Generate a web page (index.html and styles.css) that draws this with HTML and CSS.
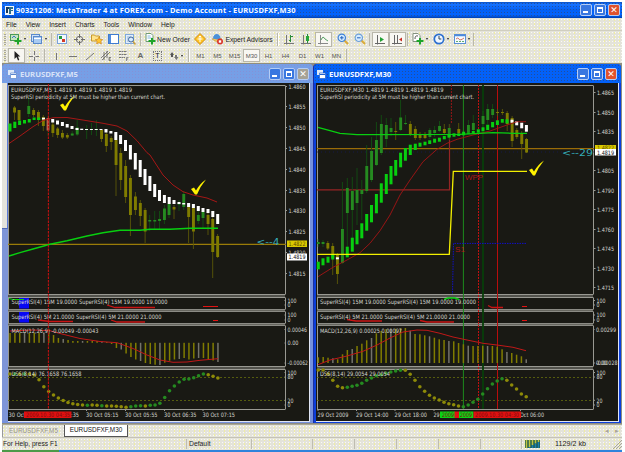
FILE: index.html
```
<!DOCTYPE html>
<html lang="en">
<head>
    <meta charset="UTF-8">
    <meta name="viewport" content="width=device-width, initial-scale=1.0">
    <title>MetaTrader 4</title>
    <link rel="stylesheet" href="styles.css">
</head>
<body>
    <div class="app">
        <header class="titlebar">
            <svg class="app-icon" viewBox="0 0 9 9"><rect width="9" height="9" fill="#f2f6fa"/><path d="M1 1h3v2H3v4H1z" fill="#173a5e"/><path d="M4 1h4v2H6v1h2v1H6v3H4z" fill="#2b6f8c"/></svg>
            <span class="app-title">90321206: MetaTrader 4 at FOREX.com - Demo Account - EURUSDFXF,M30</span>
            <span class="win-buttons">
                <i class="wb min"></i><i class="wb max"></i><i class="wb close">&#10005;</i>
            </span>
        </header>

        <nav class="menu">
            <span>File</span><span>View</span><span>Insert</span><span>Charts</span><span>Tools</span><span>Window</span><span>Help</span>
        </nav>

        <!-- Standard toolbar -->
        <div class="toolbar standard">
            <i class="grip"></i>
            <span class="cell w20"><svg width="12" height="12" viewBox="0 0 12 12"><rect x=".5" y="1.5" width="8" height="6" fill="#c4e4bd" stroke="#4a9a58"/><path d="M2 5l2-2 2 2" stroke="#3b77c4" fill="none"/><path d="M7 5h2v2h2.5v2H9v2.5H7V9H4.500V7H7z" fill="#1ea42a"/></svg><b class="drop"></b></span>
            <span class="cell w22"><svg width="12" height="12" viewBox="0 0 12 12"><rect x=".5" y="1.5" width="8" height="7" fill="#cfe2f8" stroke="#5a8acb"/><rect x="2.5" y="3.5" width="8" height="7" fill="#a9cbf2" stroke="#5a8acb"/><path d="M3 5.5h7" stroke="#fff"/></svg><b class="drop"></b></span>
            <i class="sep"></i>
            <span class="cell"><svg width="11" height="11" viewBox="0 0 11 11"><rect x=".5" y=".5" width="9" height="9" fill="#f2f8ff" stroke="#7aa3d8"/><path d="M2 2h3v3H2z" fill="#269a3c"/><path d="M5 5h3v3H5z" fill="#d33a28"/></svg></span>
            <span class="cell"><svg width="11" height="11" viewBox="0 0 11 11" fill="none" stroke="#6d6d6b"><circle cx="5.5" cy="5.5" r="3.2"/><path d="M5.5 0v4M5.5 7v4M0 5.5h4M7 5.5h4"/></svg></span>
            <span class="cell"><svg width="12" height="12" viewBox="0 0 12 12"><path d="M.5 2h3l1 1h4v5h-8z" fill="#ffe38a" stroke="#c8992c"/><path d="M8 4l1.2 2.3 2.5.3-1.800 1.700.5 2.600L8 9.700l-2.400 1.200.5-2.600-1.800-1.700 2.500-.3z" fill="#ffc531" stroke="#c67d1c" stroke-width=".6"/></svg></span>
            <span class="cell"><svg width="11" height="10" viewBox="0 0 11 10"><rect x=".5" y=".5" width="10" height="9" fill="#fff" stroke="#3f7cd0"/><path d="M2 1v8" stroke="#4e8ce0" stroke-width="2"/></svg></span>
            <span class="cell"><svg width="11" height="11" viewBox="0 0 11 11"><rect x=".5" y=".5" width="8" height="9" fill="#e2eefb" stroke="#7fa8da"/><path d="M2 3h4M2 5h3M2 7h3" stroke="#6e98cc" stroke-width=".7"/><circle cx="6" cy="5.5" r="2.5" fill="#d8ecff" stroke="#44699c"/><path d="M8 7.5l2.5 3" stroke="#c79a3c" stroke-width="1.3"/></svg></span>
            <i class="sep"></i>
            <span class="cell order"><svg width="12" height="12" viewBox="0 0 12 12"><path d="M2 .5h5l2 2v6H2z" fill="#fff" stroke="#719a76"/><path d="M3.5 3h3M3.5 5h4" stroke="#4c9bd0" stroke-width=".7"/><path d="M7 5h2v2h2.5v2H9v2.5H7V9H4.5V7H7z" fill="#1ea42a"/></svg>New Order</span>
            <span class="cell w18"><svg width="12" height="12" viewBox="0 0 12 12"><path d="M6 .5L11.5 6 6 11.5.5 6z" fill="#ffc323" stroke="#d08b19"/><path d="M6 3v6M3.5 6h5M4.7 4.2L6 3l1.300 1.200" stroke="#fff" fill="none"/></svg></span>
            <span class="cell advisors"><svg width="13" height="12" viewBox="0 0 13 12"><path d="M1 6l5-2 5 2-5 3z" fill="#f4c65a" stroke="#b88730" stroke-width=".5"/><path d="M2 5.500c0-6 7.500-6 7.500 0l-3.500 1z" fill="#4b91d8"/><circle cx="9" cy="8.500" r="3" fill="#d9372a"/><rect x="7.800" y="7.300" width="2.400" height="2.400" fill="#fff"/></svg>Expert Advisors</span>
            <i class="sep wide"></i>
            <span class="cell"><svg width="11" height="11" viewBox="0 0 11 11" fill="none"><path d="M2.5 1v9.500M0 9.5h10" stroke="#777"/><path d="M6.5 1v7M5 6.5h1.500M6.5 2.5H9" stroke="#2d8b3b"/></svg></span>
            <span class="cell"><svg width="11" height="11" viewBox="0 0 11 11" fill="none"><path d="M2.5 1v9.500M0 9.5h10" stroke="#777"/><path d="M6.5 0v9" stroke="#2d8b3b"/><path d="M5 2h3v5H5z" fill="#28a63c"/></svg></span>
            <span class="cell on"><svg width="11" height="11" viewBox="0 0 11 11" fill="none"><path d="M2.5 1v9.500M0 9.5h10" stroke="#888"/><path d="M3 6q2-5 4-1l3 2" stroke="#58a264"/></svg></span>
            <span class="cell gap"><svg width="12" height="12" viewBox="0 0 12 12"><path d="M7 7l4 4" stroke="#d9a93a" stroke-width="2"/><circle cx="4.8" cy="4.8" r="3.7" fill="#d5ebff" stroke="#3f83d6" stroke-width="1.2"/><path d="M3 4.8h3.600M4.8 3v3.600" stroke="#2463bd"/></svg></span>
            <span class="cell"><svg width="12" height="12" viewBox="0 0 12 12"><path d="M7 7l4 4" stroke="#d9a93a" stroke-width="2"/><circle cx="4.8" cy="4.8" r="3.7" fill="#d5ebff" stroke="#6ea0d8" stroke-width="1.2"/><path d="M3 4.8h3.600" stroke="#2463bd"/></svg></span>
            <i class="sep"></i>
            <span class="cell on"><svg width="11" height="11" viewBox="0 0 11 11" fill="none"><path d="M2.5 1v9.500M0 9.5h10" stroke="#666"/><path d="M5 3l4 2.500L5 8z" fill="#22a135"/></svg></span>
            <span class="cell on"><svg width="11" height="11" viewBox="0 0 11 11" fill="none"><path d="M2.5 1v9.500M0 9.5h10M5.5 1v8" stroke="#666"/><path d="M10 3.500L7 5.500l3 2z" fill="#c92d24"/></svg></span>
            <i class="sep"></i>
            <span class="cell w20"><svg width="12" height="12" viewBox="0 0 12 12"><path d="M1 .5h5l2 2v6H1z" fill="#fff" stroke="#84927f"/><path d="M3 6q0-4 3-3" stroke="#555" fill="none"/><path d="M7 5h2v2h2.500v2H9v2.500H7V9H4.500V7H7z" fill="#1ea42a"/></svg><b class="drop"></b></span>
            <span class="cell w22"><svg width="12" height="12" viewBox="0 0 12 12"><circle cx="6" cy="6" r="4.7" fill="#eef6ff" stroke="#2c6fd0" stroke-width="1.7"/><path d="M6 3v3h2.300" stroke="#345" fill="none"/></svg><b class="drop"></b></span>
            <span class="cell w20"><svg width="12" height="10" viewBox="0 0 12 10"><rect x=".5" y=".5" width="11" height="9" fill="#f6fbff" stroke="#5b8fd4"/><path d="M1 1.500h10" stroke="#4b8be0" stroke-width="1.5"/><path d="M2 5q2-2 3 0t5-1" stroke="#c4513c" fill="none" stroke-width=".8"/><path d="M2 7.500h8" stroke="#3f9a4d" stroke-width=".8" stroke-dasharray="2 1"/></svg><b class="drop"></b></span>
            <i class="sep"></i>
        </div>

        <!-- Line studies and periods -->
        <div class="toolbar studies">
            <i class="grip"></i>
            <span class="cell on"><svg width="8" height="10" viewBox="0 0 8 10"><path d="M1.500 0v8l2-2 1.500 3.500 1.300-.6L5 5.500h2.300z" fill="#222"/></svg></span>
            <span class="cell w18"><svg width="10" height="10" viewBox="0 0 10 10" stroke="#777"><path d="M5.5 0v4M5.5 6v4M0 5.5h4M6.5 5.5H10"/></svg></span>
            <i class="sep"></i>
            <span class="cell"><svg width="10" height="10" viewBox="0 0 10 10" stroke="#777"><path d="M5.5 2v7"/></svg></span>
            <span class="cell"><svg width="10" height="10" viewBox="0 0 10 10" stroke="#777"><path d="M1 5.5h8"/></svg></span>
            <span class="cell"><svg width="10" height="10" viewBox="0 0 10 10" stroke="#777"><path d="M1 9l8-7"/></svg></span>
            <span class="cell"><svg width="11" height="11" viewBox="0 0 11 11" stroke="#666" fill="none"><path d="M0 8l7-7M1 10l8-8M3 2v8M6 1v7" stroke-width=".8"/><path d="M10 7.500H8v3h2M8 9h1.500" stroke-width=".8"/></svg></span>
            <span class="cell"><svg width="11" height="11" viewBox="0 0 11 11" stroke="#777"><path d="M1 1.500h8M1 4.500h8M1 7.500h6" stroke-dasharray="2 .5"/><path d="M8.500 11V7.500h2M8.500 9H10" fill="none" stroke-width=".8"/></svg></span>
            <span class="cell letter">A</span>
            <span class="cell"><span class="label-tool">T</span></span>
            <span class="cell w20"><svg width="10" height="10" viewBox="0 0 10 10"><path d="M1 4l2-3 2 3H4v2H2V4z" fill="#555"/><path d="M5 6h1V4h2v2h1.500L7.500 9z" fill="#777"/></svg><b class="drop"></b></span>
            <i class="sep wide"></i>
            <span class="period">M1</span><span class="period">M5</span><span class="period">M15</span><span class="period on">M30</span><span class="period">H1</span><span class="period">H4</span><span class="period">D1</span><span class="period">W1</span><span class="period">MN</span>
            <i class="sep"></i>
        </div>

        <main class="workspace">
            <section class="chart-window inactive">
                <div class="chart-title">
                    <svg width="9" height="9" viewBox="0 0 9 9"><path d="M0 0h6v5H0z" fill="#dfeaf8"/><path d="M2.500 3h6v5.500h-6z" fill="#fff" stroke="#5c86cc" stroke-width=".7"/><path d="M3 4.500h5" stroke="#5c86cc"/></svg>
                    <span class="chart-name">EURUSDFXF,M5</span>
                    <span class="win-buttons"><i class="wb min"></i><i class="wb max"></i><i class="wb close">&#10005;</i></span>
                </div>
                <div class="chart-body">
                    <div class="edge"><div class="edge-dock"></div></div>
                    <svg class="chart" id="chart-m5" width="301" height="338" viewBox="8 83 301 338"></svg>
                </div>
            </section>
            <section class="chart-window active">
                <div class="chart-title">
                    <svg width="9" height="9" viewBox="0 0 9 9"><path d="M0 0h6v5H0z" fill="#dfeaf8"/><path d="M2.500 3h6v5.500h-6z" fill="#fff" stroke="#2060cc" stroke-width=".7"/><path d="M3 4.500h5" stroke="#2060cc"/></svg>
                    <span class="chart-name">EURUSDFXF,M30</span>
                    <span class="win-buttons"><i class="wb min"></i><i class="wb max"></i><i class="wb close">&#10005;</i></span>
                </div>
                <div class="chart-body">
                    <svg class="chart" id="chart-m30" width="302" height="338" viewBox="316 83 302 338"></svg>
                </div>
            </section>
        </main>

        <div class="tabs">
            <span class="tab">EURUSDFXF,M5</span>
            <span class="tab current">EURUSDFXF,M30</span>
            <span class="tab-arrows"><i>&#9666;</i><i>&#9656;</i></span>
        </div>

        <footer class="status">
            <span class="st help">For Help, press F1</span>
            <span class="st profile">Default</span>
            <span class="st c60"></span><span class="st"></span><span class="st"></span><span class="st"></span><span class="st"></span><span class="st c40"></span>
            <span class="st traffic">
                <svg width="15" height="8" viewBox="0 0 15 8"><rect width="15" height="8" fill="#1d5a50"/><path d="M1.500 0v8M4.500 0v7M7.500 0v5M10.500 0v3.500M13.500 0v2" stroke="#c0c443" stroke-width="1.6"/><path d="M4.500 7v1M7.500 5v3M10.500 3.500v4.500M13.500 2v6" stroke="#1b7eb0" stroke-width="1.6"/></svg>
                <span>1129/2 kb</span>
            </span>
            <svg class="resize" width="9" height="9" viewBox="0 0 9 9"><path d="M0 9l9-9M3 9l6-6M6 9l3-3" stroke="#aaa899"/></svg>
        </footer>
        <div class="taskbar"><i class="start"></i></div>
    </div>
    <script src="script.js"></script>
</body>
</html>
```
FILE: styles.css
```
body {
    margin: 0;
    background: #fff;
    font-family: "Liberation Sans", Arial, sans-serif;
    font-size: 7px;
    color: #222;
    overflow: hidden;
}

.app {
    width: 620px;
    height: 450px;
    padding: 2px 3px 0 2px;
    display: flex;
    flex-direction: column;
}

i {
    font-style: normal;
}

svg {
    display: block;
    flex: none;
}

/* title bar */
.titlebar {
    height: 16px;
    flex: none;
    display: flex;
    align-items: center;
    box-sizing: border-box;
    padding: 0 2px 0 3px;
    color: #fff;
    background-color: #0260f6;
    background-image: radial-gradient(#234f9d 0.6px, transparent 0.8px), linear-gradient(#0a4fc0 0, #1672ff 2px, #0460f4 8px, #0264ff 13px, #0040b0 16px);
    background-size: 3px 3px, 100% 100%;
}

.app-icon {
    width: 9px;
    height: 9px;
}

.app-title,
.chart-name {
    font-family: "Noto Sans", sans-serif;
    font-weight: bold;
    font-size: 7.5px;
    margin-left: 2px;
    white-space: nowrap;
    color: #f6faff;
}

.app-title {
    letter-spacing: 0.15px;
}

.win-buttons {
    display: flex;
    gap: 2px;
    margin-left: auto;
}

.wb {
    width: 12px;
    height: 12px;
    box-sizing: border-box;
    border: 1px solid #b5cdf5;
    border-radius: 2px;
    background: #3977e0;
    display: flex;
    align-items: center;
    justify-content: center;
    color: #fff;
    font: bold 9px "DejaVu Sans", sans-serif;
}

.wb.min::before {
    content: "";
    width: 5px;
    height: 2px;
    margin: 4px 2px 0 0;
    background: #fff;
}

.wb.max::before {
    content: "";
    width: 4px;
    height: 3px;
    border: 1px solid #fff;
    border-top-width: 2px;
}

.wb.close {
    background: #e0532d;
}

/* menu and toolbars */
.menu,
.toolbar,
.tabs,
.status {
    background-color: #e4e3da;
    background-image: radial-gradient(#fbfaf4 0.6px, transparent 0.8px), radial-gradient(#f3ef9c 0.6px, transparent 0.9px);
    background-size: 3px 3px, 5px 4px;
}

.menu {
    height: 12px;
    flex: none;
    display: flex;
    align-items: center;
    gap: 9px;
    padding-left: 4px;
    font-size: 6.7px;
    border-bottom: 1px solid #d0cebf;
}

.toolbar {
    height: 16px;
    flex: none;
    display: flex;
    align-items: center;
}

.studies {
    border-top: 1px solid #f6f5ee;
    height: 15px;
}

.grip {
    width: 2px;
    height: 11px;
    margin: 0 2px;
    background: repeating-linear-gradient(#aaa898 0 1px, transparent 1px 2px);
}

.cell {
    width: 17px;
    height: 15px;
    box-sizing: border-box;
    flex: none;
    display: flex;
    align-items: center;
    justify-content: center;
}

.cell.on,
.period.on {
    border: 1px solid #b9b7aa;
    background: #f8f7f2;
}

.w18 { width: 18px; }
.w20 { width: 20px; }
.w22 { width: 22px; }

.gap {
    margin-left: 2px;
}

.order {
    width: 48px;
    gap: 1px;
}

.advisors {
    width: 66px;
    gap: 1px;
    white-space: nowrap;
}

.order,
.advisors {
    font-size: 6.8px;
}

.drop {
    border: 1.5px solid transparent;
    border-top: 2px solid #222;
    border-bottom: 0;
    margin-left: 2px;
}

.sep {
    width: 1px;
    height: 13px;
    margin: 0 2px 0 1px;
    background: #bab8aa;
    flex: none;
}

.sep.wide {
    margin: 0 2px;
    border-right: 1px solid #fff;
}

.letter {
    font-size: 8px;
    font-weight: bold;
    color: #666;
}

.label-tool {
    width: 7px;
    height: 8px;
    border: 1px dotted #777;
    text-align: center;
    line-height: 8px;
}

.period {
    width: 17px;
    height: 13px;
    box-sizing: border-box;
    display: flex;
    align-items: center;
    justify-content: center;
    font-size: 6px;
    color: #555;
}

/* MDI area */
.workspace {
    height: 361px;
    flex: none;
    display: flex;
    background: #8f8d80;
}

.chart-window {
    box-sizing: border-box;
    height: 359px;
    margin-top: 1px;
    border-radius: 4px 4px 0 0;
}

.inactive {
    width: 311px;
    background: #7590dd;
}

.active {
    width: 308px;
    background: #0b3fdc;
    border-left: 1px solid #1a2fa4;
}

.chart-title {
    height: 19px;
    display: flex;
    align-items: center;
    padding: 1px 4px 0 6px;
    box-sizing: border-box;
    border-radius: 4px 4px 0 0;
    background-color: #769fe6;
    background-image: radial-gradient(#8591d6 0.6px, transparent 0.8px);
    background-size: 3px 3px;
}

.active .chart-title {
    padding-left: 3px;
    background-color: #0361f8;
    background-image: radial-gradient(#234f9d 0.6px, transparent 0.8px);
}

.chart-name {
    font-size: 7.7px;
    margin-left: 3px;
}

.inactive .chart-name {
    color: #d8e2f8;
}

.inactive .close {
    background: #a5a296;
}

.chart-body {
    display: flex;
}

.active .chart-body {
    padding-left: 2px;
}

.chart {
    border-right: 1px solid #dfe4f4;
    border-bottom: 1px solid #dfe4f4;
    background: #191914;
}

.edge {
    width: 6px;
    height: 338px;
    background: #7e95d8;
}

.edge-dock {
    width: 5px;
    height: 145px;
    background: #e4e3dc;
    border-bottom: 1px solid #5269b5;
    border-right: 1px solid #5a7ad8;
}

/* bottom tabs */
.tabs {
    height: 13px;
    flex: none;
    display: flex;
    align-items: stretch;
    border-top: 1px solid #aaa899;
    box-sizing: border-box;
}

.tab {
    width: 62px;
    text-align: center;
    line-height: 11px;
    font-size: 6.4px;
    color: #96948a;
    border-left: 1px solid #999;
    box-sizing: border-box;
}

.tab.current {
    width: 64px;
    color: #111;
    background: #fff;
    border: 1px solid #555;
    border-top: 0;
    line-height: 10px;
}

.tab-arrows {
    margin-left: auto;
    padding-right: 3px;
    color: #a9a49b;
    line-height: 11px;
}

.tab-arrows i {
    margin-left: 6px;
}

/* status bar */
.status {
    height: 13px;
    flex: none;
    display: flex;
    align-items: center;
    border-top: 1px solid #c5c3b6;
    box-sizing: border-box;
}

.st {
    width: 42px;
    height: 10px;
    line-height: 10px;
    border-right: 1px solid #bfbdb0;
    box-sizing: border-box;
    flex: none;
}

.help {
    width: 185px;
    padding-left: 1px;
    font-size: 6.6px;
}

.profile {
    width: 65px;
    padding-left: 2px;
    font-size: 6.8px;
}

.c60 { width: 61px; }
.c40 { width: 41px; }

.traffic {
    width: 90px;
    border: 0;
    display: flex;
    align-items: center;
    gap: 15px;
    padding-left: 3px;
    font-size: 7.2px;
}

.resize {
    margin-left: auto;
}

.taskbar {
    height: 2px;
    flex: none;
    background: #2f83dc;
}

.start {
    display: block;
    width: 57px;
    height: 2px;
    background: #4c9a48;
}

/* chart drawing */
.chart text {
    font-family: "DejaVu Sans Condensed", "DejaVu Sans", sans-serif;
    font-size: 6px;
    fill: #d6d6d0;
}

.chart .stamp {
    fill: #7d0f0f;
}

.chart .on-yellow {
    fill: #5d4b00;
}

.chart .on-white {
    fill: #111;
}

.chart .count {
    fill: #35aeb8;
    font-family: "DejaVu Sans", sans-serif;
}

.chart .pivot {
    fill: #ab1818;
    font-family: "Liberation Sans", sans-serif;
    font-size: 8px;
}
```
FILE: script.js
```
const NS = 'http://www.w3.org/2000/svg';
const STEP = 4.835;
const OLIVE = '#807c00';
const GREEN = '#258a20';
const LIME = '#08cf10';

function painter(id) {
    const svg = document.getElementById(id);
    function add(tag, attrs) {
        const el = document.createElementNS(NS, tag);
        for (const key in attrs) el.setAttribute(key, attrs[key]);
        svg.appendChild(el);
        return el;
    }
    return {
        rect: (x, y, w, h, fill) => add('rect', { x, y, width: w, height: h, fill }),
        line: (x1, y1, x2, y2, stroke, width = 1, dash = '') =>
            add('path', { d: `M${x1} ${y1}L${x2} ${y2}`, stroke, 'stroke-width': width, 'stroke-dasharray': dash }),
        curve: (points, stroke, width = 1, dash = '') =>
            add('polyline', { points: points.join(' '), fill: 'none', stroke, 'stroke-width': width, 'stroke-dasharray': dash }),
        dot: (cx, cy, fill) => add('circle', { cx, cy, r: 1.8, fill }),
        text: (str, x, y, width, cls = '', size = '') => {
            const el = add('text', { x, y, class: cls });
            if (width) {
                el.setAttribute('textLength', width);
                el.setAttribute('lengthAdjust', 'spacingAndGlyphs');
            }
            if (size) el.style.fontSize = size + 'px';
            el.textContent = str;
        },
        tick: (x, y) => add('path', { d: `M${x} ${y + 8}l3-1.5 2 3q4-7 10-11q-6 7-9 15h-2z`, fill: '#fff200' })
    };
}

// candles: [x, top, bottom, colour, wick top, wick bottom]
function candles(p, list) {
    list.forEach(([x, top, bottom, color, high, low]) => {
        if (high !== undefined) p.line(x, high, x, low, color === OLIVE ? '#5b5808' : '#124f12', 0.9);
        p.rect(x - 1.4, top, 2.9, bottom - top, color);
    });
}

// smoothed bars: [x, top, bottom]
function bars(p, list, color) {
    list.forEach(([x, top, bottom]) => p.rect(x - 1.5, top, 3, bottom - top, color));
}

// frame of price area and the four indicator panes
function frame(p, left, right) {
    [[85.5, 294.5], [297.5, 309.5], [311.5, 323.5], [325.5, 366.5], [369.5, 409.5]].forEach(([top, bottom]) => {
        p.line(left, top, right, top, '#999992');
        p.line(left, bottom, right, bottom, '#999992');
        p.line(left + 0.5, top, left + 0.5, bottom, '#999992');
        p.line(right + 0.5, top, right + 0.5, bottom, '#999992');
    });
    [296, 310.5, 324.5, 368].forEach(y => p.line(left, y, right, y, '#66665f', 1.5));
    p.line(left, 377.5, right, 377.5, '#656d0c', 0.8, '2 2');
    p.line(left, 400.5, right, 400.5, '#656d0c', 0.8, '2 2');
}

function scale(p, x, labels) {
    labels.forEach(([str, y, width]) => {
        p.line(x - 3, y, x - 1.5, y, '#999992');
        p.text(str, x, y + 2.2, width || 17);
    });
}

function macd(p, x0, base, ends) {
    ends.forEach((y, i) => {
        const x = x0 + i * STEP;
        p.rect(x - 0.7, Math.min(y, base), 1.5, Math.abs(base - y), i % 4 === 3 ? '#74736a' : OLIVE);
    });
}

function dss(p, x0, levels, rising) {
    levels.forEach((y, i) => p.dot(x0 + i * STEP, y, rising(i) ? GREEN : '#8d8a08'));
}

function drawM5() {
    const p = painter('chart-m5');
    frame(p, 8, 285);
    p.line(8, 244.4, 286, 244.4, '#9a7c08', 1.2);

    candles(p, [
        [14.5, 107.5, 112.5, OLIVE, 106, 120], [19, 110, 120, OLIVE, 110, 121], [28.7, 106, 114, GREEN, 97, 117],
        [33.6, 110, 115, OLIVE, 108, 117], [38.4, 112, 120, OLIVE, 110, 126], [43.3, 117, 126, OLIVE, 115, 131],
        [48, 118, 130.5, '#c0684f', 116, 136], [52.8, 124.5, 133, OLIVE, 122, 137], [57.6, 128.5, 135, OLIVE, 127, 138],
        [62.4, 133, 137.5, OLIVE, 130, 139], [67.3, 135, 137.5, OLIVE, 133, 139], [72.2, 133.5, 135.5, GREEN, 131, 136],
        [77.2, 127.5, 134.5, GREEN, 120, 136], [86.7, 129, 130, GREEN, 125, 139], [91.5, 129, 130, GREEN, 123, 135],
        [96.4, 129, 130, GREEN, 120, 136], [101.5, 130, 139, OLIVE, 129, 142], [106.3, 134, 146, OLIVE, 132, 152],
        [111.2, 138, 142, OLIVE, 136, 150], [116, 140, 165, OLIVE, 138, 196], [120.7, 153, 180, OLIVE, 148, 190],
        [125.6, 166, 197, OLIVE, 160, 203], [130.4, 178, 215, OLIVE, 175, 236], [135.4, 196.5, 210, OLIVE, 192, 215],
        [140.3, 203, 216, OLIVE, 200, 226], [145.1, 210, 231.5, OLIVE, 208, 243], [149.7, 220, 221.5, GREEN, 215, 231],
        [154.7, 220, 221.5, GREEN, 211, 229], [159.5, 219, 221, GREEN, 211, 229], [164.4, 208.5, 220, GREEN, 205, 224],
        [169, 204, 215, GREEN, 201, 218], [174, 207, 209.5, OLIVE, 205, 219], [179, 203, 204.5, GREEN, 200, 211],
        [183.7, 194, 207, GREEN, 191, 210], [188.6, 207, 217, OLIVE, 205, 243], [193.4, 208, 231.5, OLIVE, 205, 249],
        [198.3, 215, 221, GREEN, 211, 224], [203, 212, 218, GREEN, 210, 228], [208, 215, 224, OLIVE, 212, 235],
        [212.7, 219, 252, OLIVE, 217, 278], [217.6, 236, 257, OLIVE, 234, 258]
    ]);
    bars(p, [[10, 123.5, 131.5], [14.8, 121.7, 128], [19.6, 120.5, 125], [24.5, 120, 123.5], [29.3, 119, 122.5], [34.1, 117.5, 120], [38.7, 117.5, 120]], LIME);
    bars(p, [
        [43.5, 117.7, 119.5], [52.7, 119, 122.5], [57.5, 120.5, 124.5], [62.4, 122, 126], [67.2, 124, 127.5],
        [72, 126, 129], [77, 128, 130], [81.7, 128.7, 130], [86.5, 129, 130], [91.4, 129, 130], [96.2, 129, 130], [101, 129, 130],
        [106, 129, 132.5], [110.9, 131, 133.5], [115.8, 132, 140], [120.6, 135, 144], [125.5, 140, 151], [130.4, 145, 159.5],
        [135.3, 153, 169.5], [140.2, 160, 177], [145, 169, 185], [149.9, 176, 191], [154.7, 184, 197], [159.5, 190, 201],
        [164.4, 195, 203], [169.2, 197, 204], [174, 200, 204], [179, 202, 204], [183.7, 203, 204.5], [188.6, 203, 207],
        [193.4, 204, 208], [198.3, 206, 211], [203, 208, 212], [208, 209, 213], [212.8, 211, 217], [217.7, 214, 224]
    ], '#fff');
    p.curve([9, 143.5, 20, 136, 33, 126.7, 43, 120.5, 53, 117.7, 67, 117.5, 87, 120.7, 103, 123.3, 117, 126, 127, 131, 137, 140.7, 147, 152.7, 150, 155, 163, 175, 173, 185, 183, 191.7, 193, 195, 207, 198, 217, 202], '#b51616', 0.9);
    p.curve([9, 256, 20, 252.7, 33, 249, 50, 244.3, 67, 240.7, 87, 236, 103, 232.7, 120, 230.3, 140, 230.3, 150, 229.3, 170, 229.3, 190, 228.3, 218, 228.3], LIME, 1.4);
    p.tick(60, 97);
    p.tick(191, 181);

    p.text('EURUSDFXF,M5  1.4819 1.4819 1.4819 1.4819', 11, 92.2, 121);
    p.text('SuperRSI periodicity at 5M must be higher than current chart.', 11, 98.6, 154);
    scale(p, 288.5, [['1.4860', 86.5], ['1.4855', 106.5], ['1.4850', 127.5], ['1.4845', 148.5], ['1.4840', 169.5], ['1.4835', 190.5], ['1.4830', 210.5], ['1.4825', 231.5], ['1.4820', 252.5], ['1.4815', 273.5]]);
    p.rect(287, 240.5, 20, 6.5, '#d9c900');
    p.text('1.4822', 288.5, 246, 17, 'on-yellow');
    p.rect(287, 253.5, 20, 7, '#fff');
    p.text('1.4819', 288.5, 259.3, 17, 'on-white');
    p.text('<--4', 256.5, 245, 23, 'count', 8);

    // SuperRSI panes
    p.rect(19, 298, 10, 10.5, '#0808f4');
    p.rect(19, 312, 10, 10.5, '#0808f4');
    p.curve([9, 298.5, 13, 299.5, 24, 299.5], LIME);
    p.curve([107, 305, 115, 307.5, 155, 307.5], '#c81414', 1.3);
    p.line(203, 306.5, 218, 306.5, '#e01414');
    p.curve([38, 320, 50, 321.5, 73, 321.5], '#c81414', 1.3);
    p.curve([111, 320, 117, 322, 145, 322], '#c81414', 1.3);
    p.line(213, 320.5, 218, 320.5, '#e01414');
    p.text('SuperRSI(4) 15M 19.0000  SuperRSI(4) 15M 19.0000 19.0000', 11.5, 304.3, 156);
    p.text('SuperRSI(4) 5M 21.0000  SuperRSI(4) 5M 21.0000 21.0000', 11.5, 318.8, 150);
    scale(p, 287.5, [['100', 300.5, 9], ['0', 305, 3], ['100', 315, 9], ['0', 320, 3]]);

    macd(p, 10, 342.8, [333, 333, 333, 333, 333, 333, 333, 333, 333, 335, 338, 339, 340, 341, 341, 341, 341, 341, 341, 341.5, 342, 344, 348, 349.5, 353.5, 357, 359.5, 361, 363, 364, 364.7, 365, 362.7, 360.7, 359.5, 359, 358, 359.5, 358.5, 358, 358, 359, 360.5, 362]);
    p.curve([10, 331, 33, 330, 50, 330.7, 60, 333.5, 80, 338.5, 100, 341.5, 117, 342.7, 133, 348.5, 147, 355, 160, 360, 173, 362.3, 187, 362, 200, 360.3, 218, 358.7], '#c01818');
    p.text('MACD(12,26,9) -0.00049 -0.00043', 11.5, 333.2, 87);
    scale(p, 287.5, [['0.00046', 329.5, 19.5], ['0.00', 343, 11], ['-0.00062', 363, 20.5]]);

    dss(p, 10, [374, 374, 374, 374, 374, 375, 379.7, 386.7, 391.5, 395, 398, 400.5, 402.5, 403.7, 404.5, 405, 405.3, 405, 405.3, 405.7, 406, 406, 406.3, 406.7, 407.3, 406.7, 406, 405.7, 406, 405.3, 405, 403.3, 397.5, 390.7, 386, 382, 379.3, 379, 377.7, 375.7, 374, 374.7, 376.3, 378],
        i => i === 1 || i === 3 || i === 16 || i === 19 || (i > 24 && i < 41 && i !== 28));
    p.text('DSS(8,14) 76.1658 76.1658', 11.5, 376.3, 70);
    scale(p, 287.5, [['100', 372.5, 9], ['80', 377, 6], ['20', 400.3, 6], ['0', 405, 3]]);

    p.line(48.4, 84, 48.4, 409, '#bf1010', 1.1, '2.5 1');
    p.text('30 Oct', 8.5, 417.2, 17);
    p.text(':35', 71, 417.2, 8);
    p.rect(24, 411.5, 47.5, 6.5, '#e01010');
    p.text('2009.10.30 04:35', 26, 417, 44, 'stamp');
    [['30 Oct 05:15', 86], ['30 Oct 05:55', 125], ['30 Oct 06:35', 164], ['30 Oct 07:15', 202.5]].forEach(([s, x]) => {
        p.line(x + 0.5, 409, x + 0.5, 411, '#999992');
        p.text(s, x, 417.2, 32.5);
    });
}

function drawM30() {
    const p = painter('chart-m30');
    frame(p, 317, 593);
    p.line(317, 148.6, 594, 148.6, '#9a6c08', 1.2);
    p.line(317, 152, 594, 152, '#151a60', 0.7, '1 3');

    p.line(463.4, 85, 463.4, 409, '#1d8a1d');
    p.line(478.5, 85, 478.5, 409, '#c01010', 1, '2 1');
    p.line(483, 85, 483, 409, '#073f09', 1.8);
    p.line(497.5, 85, 497.5, 409, '#b80d0d');
    p.curve([317, 189.8, 449.5, 189.8, 449.5, 124], '#952525', 1.2);
    p.line(451.4, 85, 451.4, 124, '#951717', 1, '2 1');
    p.curve([526, 243.4, 453.5, 243.4, 452.5, 294], '#1010c8', 1, '1.5 1');

    candles(p, [
        [318.3, 242, 244, GREEN, 239, 247], [323, 242, 244, GREEN, 240, 247], [327.8, 243, 248.5, OLIVE, 241, 250],
        [332.7, 246, 258, OLIVE, 243, 275], [337.4, 255, 274, OLIVE, 253, 284], [342.4, 229, 263, GREEN, 182, 264],
        [347.3, 188, 213, GREEN, 178, 250], [352.3, 191, 210, GREEN, 177, 245], [357, 190, 203, GREEN, 168, 225],
        [361.8, 190, 194, GREEN, 180, 220], [366.7, 166, 191, GREEN, 145, 193], [371.5, 151, 180, GREEN, 137, 182],
        [376.4, 140, 165, GREEN, 122, 166], [381.3, 124, 153, GREEN, 115, 155], [386.3, 125, 139, GREEN, 118, 147],
        [391, 128, 132, GREEN, 118, 136], [395.7, 131, 132, OLIVE, 122, 140], [400.6, 117.5, 130, GREEN, 100, 131],
        [405.5, 123, 124, GREEN, 115, 125], [410.3, 124, 134, OLIVE, 121, 136], [415.3, 129, 138, OLIVE, 126, 140],
        [420, 134, 138, OLIVE, 132, 140], [425, 135, 138, OLIVE, 132, 139], [429.8, 130, 137, GREEN, 128, 139],
        [434.6, 130, 133, GREEN, 126, 137], [439.5, 126, 131, GREEN, 121, 132], [444.3, 129, 133, OLIVE, 124, 135],
        [449.2, 128, 137, GREEN, 124, 140], [458.7, 129, 133, OLIVE, 123, 135], [468.4, 125, 132, GREEN, 120, 134],
        [473.3, 123, 130, GREEN, 115, 132], [483, 116, 124, GREEN, 111, 130], [487.7, 109, 120, GREEN, 104, 124],
        [492.6, 109, 115, GREEN, 104, 118], [497.5, 112, 113, OLIVE, 109, 116], [502.4, 112, 113, OLIVE, 109, 115],
        [507.2, 113, 124, OLIVE, 111, 131], [512.1, 118, 141, OLIVE, 116, 147], [516.8, 130, 137, OLIVE, 128, 139],
        [521.7, 133, 144, OLIVE, 131, 159], [526.5, 139, 152.5, OLIVE, 138, 153]
    ]);
    bars(p, [
        [318.3, 261.7, 269.3], [323, 258.3, 265.3], [328, 256.7, 262.7], [332.7, 255, 259.5], [347.3, 246.7, 257.3],
        [352.3, 237.7, 251.7], [357, 230, 244.3], [361.8, 223.3, 238.3], [366.7, 214, 230.7], [371.5, 205, 222.3],
        [376.4, 194, 213.3], [381.3, 183.3, 202.7], [386.3, 174, 194], [391, 166, 184.3], [395.7, 160, 175.7],
        [400.6, 152.7, 167.3], [405.4, 148, 160.7], [410.3, 144.7, 155], [415.3, 143.7, 150], [420, 142.7, 146.7],
        [425, 141.7, 145.3], [429.7, 140.3, 144], [434.6, 138.7, 142.7], [439.4, 137.7, 141.7], [444.3, 136, 139.3],
        [449, 134.3, 137.7], [454, 133.3, 136.7], [458.7, 133.3, 136], [463.6, 131.7, 135.3], [468.4, 132.3, 133.7],
        [473.3, 131, 133.3], [478.3, 129.3, 132.7], [483, 127.3, 131.3], [487.7, 124.7, 130], [492.6, 122, 127.3],
        [497.4, 120.3, 125], [502.3, 119, 122.7], [507, 119.3, 123.3]
    ], LIME);
    bars(p, [[337.4, 257.3, 259.3], [512, 119.7, 122.7], [516.7, 121.3, 125.3], [521.7, 122.7, 128.3], [526.4, 125, 131.7]], '#fff');
    p.curve([318, 276.7, 333, 267.3, 347, 260, 360, 252.7, 370, 243.3, 380, 230.7, 390, 215, 400, 195, 410, 180, 423, 161.7, 437, 149.3, 447, 143.3, 457, 139.3, 473, 135, 490, 131, 507, 125, 517, 121.7, 526, 121.7], '#a51414', 0.9);
    p.curve([318, 127.3, 330, 130.7, 340, 133.3, 357, 134.7, 460, 134.3, 493, 132.7, 513, 133.3, 527, 133.3], LIME, 1.3);
    p.curve([317, 254.4, 449.3, 254.4, 453.3, 171.4, 527, 171.4], '#f2ef00', 1.3);
    p.tick(529, 162);
    p.text('WPP', 465, 179.5, 18, 'pivot');
    p.text('S1', 455, 252, 10, 'pivot');

    p.text('EURUSDFXF,M30  1.4819 1.4819 1.4819 1.4819', 320, 92.2, 123.5);
    p.text('SuperRSI periodicity at 5M must be higher than current chart.', 320, 98.6, 154);
    scale(p, 597, [['1.4865', 92.5], ['1.4850', 112.5], ['1.4835', 131.5], ['1.4805', 170.5], ['1.4790', 190.5], ['1.4775', 209.5], ['1.4760', 229.5], ['1.4745', 248.5], ['1.4730', 268.5], ['1.4715', 287.5]]);
    p.rect(595, 145, 21, 5, '#d9c900');
    p.text('1.4822', 597, 150, 17, 'on-yellow');
    p.rect(595, 149, 21, 6.5, '#fff');
    p.text('1.4819', 597, 154.5, 17, 'on-white');
    p.text('<--29', 562, 155.5, 31, 'count', 9.5);

    // SuperRSI panes
    p.curve([444, 299.5, 448, 298, 455, 298, 459, 299.5], LIME, 1.4);
    p.curve([488, 305.5, 492, 307.5, 503, 307.5], '#c81414', 1.3);
    p.line(522, 306.5, 527, 306.5, '#e01414');
    p.curve([347, 319.5, 356, 321, 382, 321], '#c81414', 1.3);
    p.curve([420, 320.5, 427, 322, 454, 322], '#c81414', 1.3);
    p.line(522, 320.5, 527, 320.5, '#e01414');
    p.text('SuperRSI(4) 15M 19.0000  SuperRSI(4) 15M 19.0000 19.0000', 320, 304.3, 156);
    p.text('SuperRSI(4) 5M 21.0000  SuperRSI(4) 5M 21.0000 21.0000', 320, 318.8, 150);
    scale(p, 596.5, [['100', 300.5, 9], ['0', 305, 3], ['100', 315, 9], ['0', 320, 3]]);

    macd(p, 318.3, 363, [357.3, 357, 357.7, 358.3, 359.3, 354.3, 350, 349, 346, 343.7, 340.3, 338, 333.3, 331, 329, 329, 328.7, 328.3, 328, 330.7, 334, 334.3, 335.3, 336.3, 337.7, 339.3, 340, 341, 341.3, 343, 344.3, 345.7, 346, 346, 345.7, 346, 346, 346.7, 349.3, 352, 353, 354.7, 356.3, 359.3]);
    p.curve([318, 364.7, 330, 360, 347, 356, 363, 351.3, 377, 345, 390, 338, 403, 332, 417, 330, 427, 330.3, 440, 333.3, 453, 337, 467, 340, 483, 343.3, 497, 345, 513, 347.3, 526, 350.7], '#c01818');
    p.text('MACD(12,26,9) 0.00025 0.00097', 320, 333.2, 82);
    scale(p, 596, [['0.00299', 329.5, 20], ['0.00', 363, 11], ['-0.00028', 363, 21.5]]);

    dss(p, 318.3, [370, 370, 374, 380.3, 386.3, 387.7, 387.3, 386.3, 385.3, 383.3, 380.3, 378, 375.7, 374.7, 373.3, 372, 371, 370.3, 370.3, 374.3, 380.3, 386.7, 391.3, 395.3, 398, 400, 402.3, 403.7, 404.7, 406, 406.7, 405, 402.3, 399.3, 394, 388.7, 384, 381, 378.7, 380.3, 385, 389, 394, 396.7],
        i => (i > 5 && i < 18) || (i > 29 && i < 39));
    p.text('DSS(8,14) 29.0054 29.0054', 320, 376.3, 70);
    scale(p, 596.5, [['100', 372.5, 9], ['80', 377, 6], ['20', 400.3, 6], ['0', 405, 3]]);

    [['29 Oct 2009', 317.5, 31], ['29 Oct 14:00', 356, 32.5], ['29 Oct 18:00', 394.5, 32.5], ['29', 433.5, 6], ['Oct 06:00', 520, 24]].forEach(([s, x, w]) => {
        p.line(x + 0.5, 409, x + 0.5, 411, '#999992');
        p.text(s, x, 417.2, w);
    });
    p.rect(440, 411.5, 15, 6.5, '#0bd315');
    p.text('2009', 442, 417, 12, 'stamp');
    p.rect(454.5, 411.5, 5, 6.5, '#e01010');
    p.rect(459, 411.5, 14.5, 6.5, '#0bd315');
    p.text('2009', 460, 417, 12, 'stamp');
    p.rect(473.5, 411.5, 47.5, 6.5, '#e01010');
    p.text('2009.10.30 04:30', 475, 417, 44, 'stamp');
}

drawM5();
drawM30();
```
